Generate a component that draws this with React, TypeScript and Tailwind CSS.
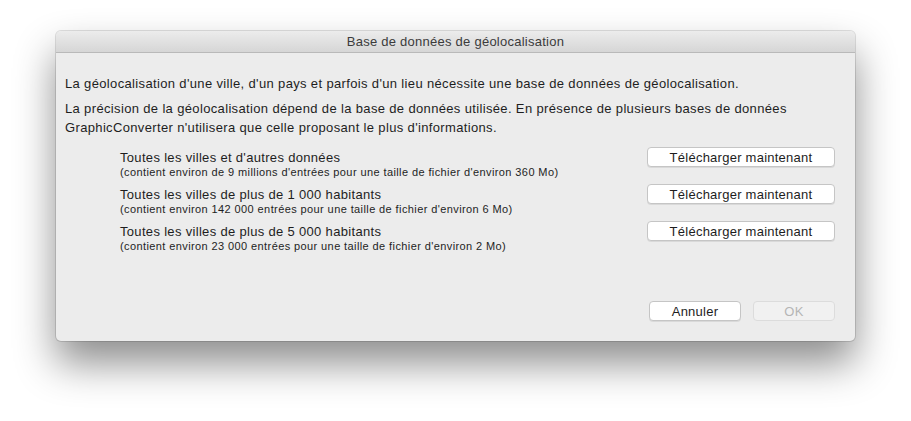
import React from 'react';

const font = { fontFamily: '"Liberation Sans", Arial, sans-serif' };

const rows = [
  {
    title: "Toutes les villes et d'autres données",
    sub: "(contient environ de 9 millions d'entrées pour une taille de fichier d'environ 360 Mo)",
  },
  {
    title: 'Toutes les villes de plus de 1 000 habitants',
    sub: "(contient environ 142 000 entrées pour une taille de fichier d'environ 6 Mo)",
  },
  {
    title: 'Toutes les villes de plus de 5 000 habitants',
    sub: "(contient environ 23 000 entrées pour une taille de fichier d'environ 2 Mo)",
  },
];

const MacButton = ({ children, disabled = false, className = '' }: { children: React.ReactNode; disabled?: boolean; className?: string }) => (
  <button
    className={`h-[20px] rounded-[4px] border text-[13px] leading-none tracking-[0.25px] ${
      disabled
        ? 'border-[#dcdcdc] bg-[#f1f1f1] text-[#b5b5b5]'
        : 'border-[#c5c5c5] bg-white text-[#1d1d1d] shadow-[0_1px_0_rgba(0,0,0,0.08)]'
    } ${className}`}
  >
    {children}
  </button>
);

export default function App() {
  return (
    <div className="w-[911px] h-[421px] bg-white overflow-hidden pt-[31px] pl-[56px]" style={font}>
      <div className="w-[799px] h-[310px] rounded-[5px] bg-[#ececec] shadow-[0_22px_40px_rgba(0,0,0,0.45),0_0_0_1px_rgba(0,0,0,0.12)] flex flex-col overflow-hidden">
        <div className="h-[22px] flex items-center justify-center bg-gradient-to-b from-[#ececec] to-[#d6d6d6] border-b border-[#b9b9b9] text-[13px] tracking-[0.25px] text-[#3b3b3b]">
          Base de données de géolocalisation
        </div>
        <div className="flex-1 flex flex-col px-[9px] pt-[21px] text-[13px] tracking-[0.35px] text-[#1e1e1e]">
          <p className="leading-[19px]">
            La géolocalisation d'une ville, d'un pays et parfois d'un lieu nécessite une base de données de géolocalisation.
          </p>
          <p className="leading-[19px] mt-[6px]">
            La précision de la géolocalisation dépend de la base de données utilisée. En présence de plusieurs bases de données
            <br />
            GraphicConverter n'utilisera que celle proposant le plus d'informations.
          </p>
          <div className="flex flex-col gap-[7px] mt-[10px] pl-[55px] pr-[11px]">
            {rows.map((r) => (
              <div key={r.title} className="flex items-start justify-between h-[30px]">
                <div className="flex flex-col pt-[3px]">
                  <span className="text-[13px] leading-[16px] tracking-[0.32px]">{r.title}</span>
                  <span className="text-[11px] leading-[13px] tracking-[0.4px]">{r.sub}</span>
                </div>
                <MacButton className="w-[188px]">Télécharger maintenant</MacButton>
              </div>
            ))}
          </div>
          <div className="flex-1" />
          <div className="flex justify-end gap-[12px] pr-[11px] pb-[20px]">
            <MacButton className="w-[92px]">Annuler</MacButton>
            <MacButton disabled className="w-[82px]">OK</MacButton>
          </div>
        </div>
      </div>
    </div>
  );
}
